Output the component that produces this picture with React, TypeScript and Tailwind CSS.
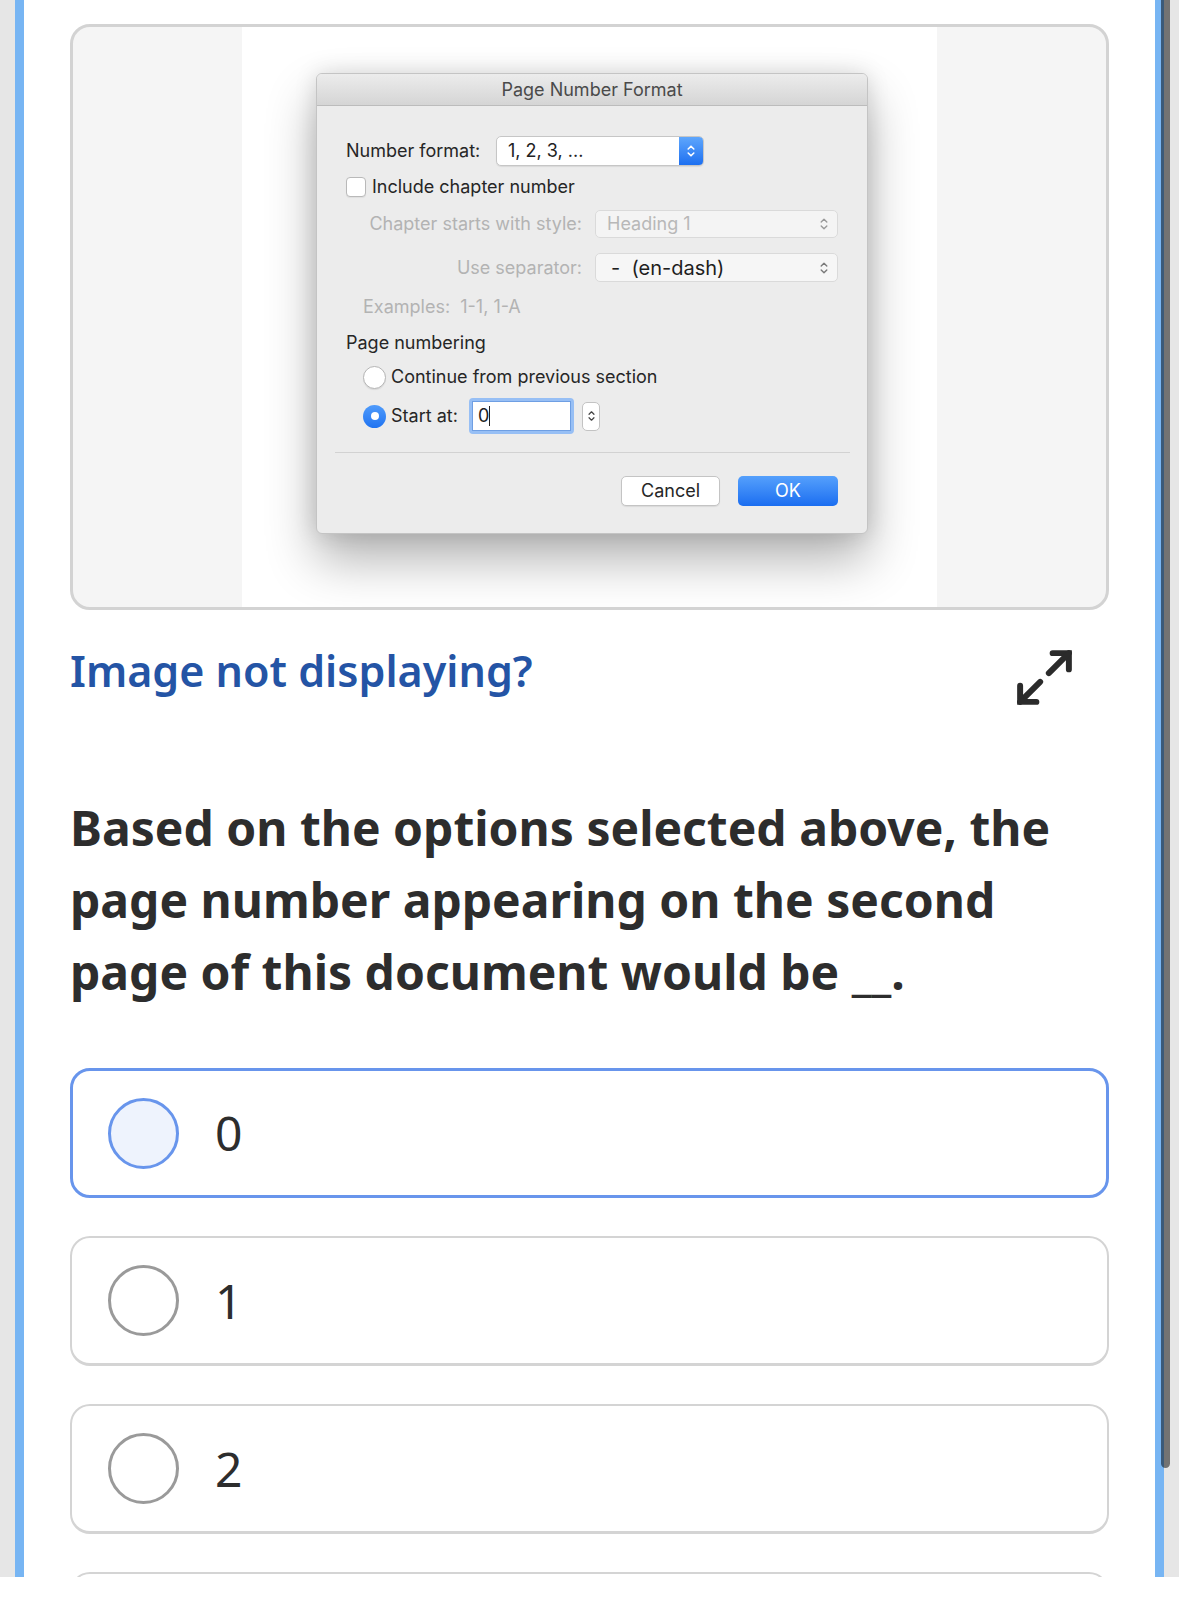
import React from "react";

function UpDown({ color, w = 8, h = 14, sw = 1.6 }: { color: string; w?: number; h?: number; sw?: number }) {
  return (
    <svg width={w} height={h} viewBox="0 0 8 14" fill="none" stroke={color} strokeWidth={sw} strokeLinecap="round" strokeLinejoin="round">
      <path d="M1.2 5 L4 2.2 L6.8 5" />
      <path d="M1.2 9 L4 11.8 L6.8 9" />
    </svg>
  );
}

function Dialog() {
  return (
    <div className="w-[552px] h-[461px] rounded-[6px] border border-[#c4c4c4] bg-[#ececec] shadow-[0_26px_50px_rgba(0,0,0,0.3),0_0_22px_rgba(0,0,0,0.13)] overflow-hidden font-['Inter','Liberation_Sans',sans-serif] text-[18px] leading-[20px] text-[#262626]">
      <div className="h-[32px] flex items-center justify-center bg-gradient-to-b from-[#ececec] to-[#d5d5d5] border-b border-[#bcbcbc] text-[#4a4a4a]">
        Page Number Format
      </div>
      <div className="px-[29px]">
        {/* Number format */}
        <div className="mt-[30px] h-[30px] flex items-center">
          <span className="w-[150px]">Number format:</span>
          <div className="w-[208px] h-[30px] flex rounded-[5px] border border-[#c6c6c6] bg-white overflow-hidden shadow-[0_1px_1px_rgba(0,0,0,0.08)]">
            <span className="flex-1 flex items-center pl-[11px] text-[#222]">1, 2, 3, ...</span>
            <span className="w-[24px] h-full flex items-center justify-center bg-gradient-to-b from-[#5ea6fc] to-[#1c6ff0]">
              <UpDown color="#ffffff" />
            </span>
          </div>
        </div>
        {/* Include chapter number */}
        <div className="mt-[11px] h-[20px] flex items-center">
          <span className="w-[20px] h-[20px] rounded-[4px] border border-[#b9b9b9] bg-white shadow-[0_1px_1px_rgba(0,0,0,0.06)]" />
          <span className="ml-[6px]">Include chapter number</span>
        </div>
        {/* Chapter starts */}
        <div className="mt-[13px] h-[28px] flex items-center">
          <span className="w-[236px] text-right text-[#b3b3b3] whitespace-nowrap">Chapter starts with style:</span>
          <div className="ml-[13px] w-[243px] h-[28px] flex items-center justify-between rounded-[5px] border border-[#dadada] bg-[#f4f4f4] pl-[11px] pr-[9px]">
            <span className="text-[#b8b8b8]">Heading 1</span>
            <UpDown color="#9a9a9a" sw={1.4} />
          </div>
        </div>
        {/* Use separator */}
        <div className="mt-[15px] h-[29px] flex items-center">
          <span className="w-[236px] text-right text-[#b3b3b3]">Use separator:</span>
          <div className="ml-[13px] w-[243px] h-[29px] flex items-center justify-between rounded-[5px] border border-[#dadada] bg-[#f6f6f6] pl-[15px] pr-[9px]">
            <span className="text-[20px] text-[#1e1e1e]">-&nbsp;&nbsp;(en-dash)</span>
            <UpDown color="#7a7a7a" sw={1.4} />
          </div>
        </div>
        {/* Examples */}
        <div className="mt-[15px] pl-[17px] text-[#b3b3b3]">Examples:&nbsp;&nbsp;1-1, 1-A</div>
        {/* Page numbering */}
        <div className="mt-[16px]">Page numbering</div>
        {/* Continue */}
        <div className="mt-[12px] h-[24px] pl-[17px] flex items-center">
          <span className="w-[23px] h-[23px] rounded-full border border-[#b5b5b5] bg-white shadow-[0_1px_1px_rgba(0,0,0,0.08)]" />
          <span className="ml-[5px]">Continue from previous section</span>
        </div>
        {/* Start at */}
        <div className="mt-[9px] h-[36px] pl-[17px] flex items-center">
          <span className="w-[23px] h-[23px] rounded-full bg-gradient-to-b from-[#4f9bfb] to-[#1f73f1] flex items-center justify-center">
            <span className="w-[8px] h-[8px] rounded-full bg-white" />
          </span>
          <span className="ml-[5px] w-[78px]">Start at:</span>
          <div className="w-[105px] h-[36px] rounded-[4px] border-[3px] border-[#97bff5] bg-[#97bff5]">
            <div className="w-full h-full bg-white border border-[#6f9fe3] flex items-center pl-[5px]">
              <span className="text-[#222]">0</span>
              <span className="w-[1px] h-[20px] bg-[#222]" />
            </div>
          </div>
          <div className="ml-[8px] w-[18px] h-[29px] rounded-[5px] border border-[#c3c3c3] bg-white flex items-center justify-center">
            <UpDown color="#444444" w={7} h={14} sw={1.4} />
          </div>
        </div>
        {/* separator */}
        <div className="mt-[18px] -ml-[11px] -mr-[12px] h-[1px] bg-[#d2d2d2]" />
        {/* buttons */}
        <div className="mt-[23px] flex justify-end">
          <div className="w-[99px] h-[30px] rounded-[5px] border border-[#c4c4c4] bg-white flex items-center justify-center shadow-[0_1px_1px_rgba(0,0,0,0.08)]">Cancel</div>
          <div className="ml-[18px] w-[100px] h-[30px] rounded-[5px] bg-gradient-to-b from-[#55a0fc] to-[#1a6df0] text-white flex items-center justify-center">OK</div>
        </div>
      </div>
    </div>
  );
}

function Option({ label, selected }: { label: string; selected?: boolean }) {
  return (
    <div
      className={
        selected
          ? "h-[130px] shrink-0 rounded-[20px] border-[3px] border-[#6895ec] flex items-center pl-[35px]"
          : "h-[130px] shrink-0 rounded-[20px] border-2 border-b-[3px] border-[#d4d4d4] flex items-center pl-[36px]"
      }
    >
      <span
        className={
          selected
            ? "w-[71px] h-[71px] rounded-full border-[3px] border-[#6895ec] bg-[#eef3fd]"
            : "w-[71px] h-[71px] rounded-full border-[3px] border-[#9a9a9a] bg-white"
        }
      />
      {label ? <span className="ml-[36px] text-[48px] leading-none text-[#2d2d2d]">{label}</span> : null}
    </div>
  );
}

export default function App() {
  return (
    <div className="relative w-[1179px] h-[1616px] bg-white overflow-hidden font-['Noto_Sans','Open_Sans',sans-serif]">
      <div className="flex h-[1577px]">
        <div className="w-[15px] bg-[#e6e6e6]" />
        <div className="w-[9px] bg-[#77b5f3]" />
        <main className="flex-1 flex flex-col overflow-hidden bg-white px-[46px] pt-[24px]">
          <div className="h-[586px] shrink-0 rounded-[20px] border-[3px] border-[#d3d3d3] bg-[#f5f5f5] flex justify-center overflow-hidden">
            <div className="w-[695px] h-full bg-white pl-[74px] pt-[46px]">
              <Dialog />
            </div>
          </div>
          <div className="mt-[31px] h-[72px] shrink-0 flex items-start justify-between">
            <span className="mt-[1px] text-[43px] leading-[58px] font-semibold text-[#2454a5]">Image not displaying?</span>
            <svg className="mr-[32px] mt-[4px]" width="65" height="65" viewBox="0 0 24 24" fill="none" stroke="#2b2b2b" strokeWidth="2.2" strokeLinecap="round" strokeLinejoin="miter">
              <path d="M15 3h6v6" />
              <path d="M21 3l-7.4 7.4" />
              <path d="M3 21l7.4-7.4" />
              <path d="M9 21H3v-6" />
            </svg>
          </div>
          <p className="mt-[79px] shrink-0 text-[48px] leading-[72px] font-bold text-[#2d2d2d] whitespace-nowrap">
            <span className="block">Based on the options selected above, the</span>
            <span className="block">page number appearing on the second</span>
            <span className="block">page of this document would be __.</span>
          </p>
          <div className="mt-[60px] flex flex-col gap-[38px]">
            <Option label="0" selected />
            <Option label="1" />
            <Option label="2" />
            <Option label="" />
          </div>
        </main>
        <div className="w-[9px] bg-[#77b5f3]" />
        <div className="w-[15px] bg-[#e6e6e6]" />
      </div>
      <div className="absolute right-[9px] top-0 h-[1468px] w-[9px] rounded-b-full bg-black/50" />
    </div>
  );
}
